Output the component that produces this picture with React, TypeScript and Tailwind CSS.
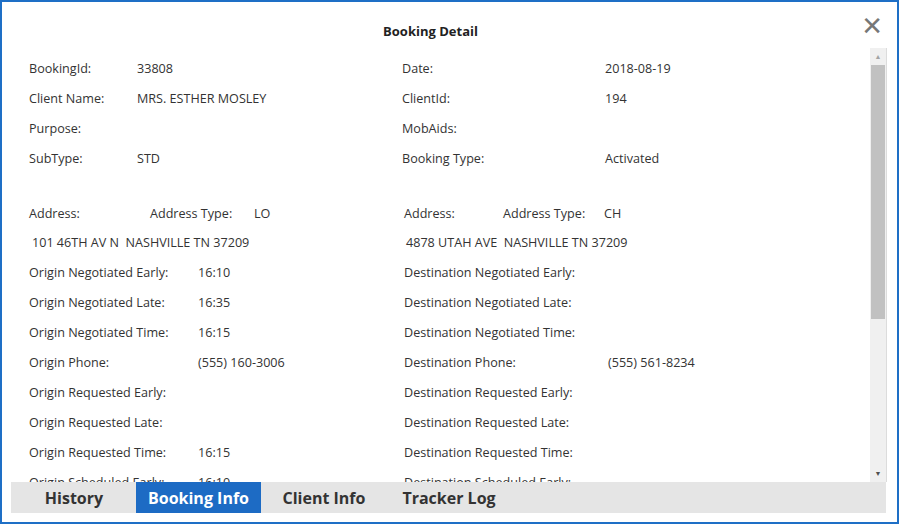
const topRows = [
  ["BookingId:", "33808", "Date:", "2018-08-19"],
  ["Client Name:", "MRS. ESTHER MOSLEY", "ClientId:", "194"],
  ["Purpose:", "", "MobAids:", ""],
  ["SubType:", "STD", "Booking Type:", "Activated"],
];

const timeRows = [
  ["Origin Negotiated Early:", "16:10", "Destination Negotiated Early:", ""],
  ["Origin Negotiated Late:", "16:35", "Destination Negotiated Late:", ""],
  ["Origin Negotiated Time:", "16:15", "Destination Negotiated Time:", ""],
  ["Origin Phone:", "(555) 160-3006", "Destination Phone:", "(555) 561-8234"],
  ["Origin Requested Early:", "", "Destination Requested Early:", ""],
  ["Origin Requested Late:", "", "Destination Requested Late:", ""],
  ["Origin Requested Time:", "16:15", "Destination Requested Time:", ""],
  ["Origin Scheduled Early:", "16:10", "Destination Scheduled Early:", ""],
];

// widths and left margins of the footer tabs
const tabs = [
  { name: "History", cls: "w-[80px]" },
  { name: "Booking Info", cls: "w-[125px] ml-[22px]" },
  { name: "Client Info", cls: "w-[104px] ml-[11px]" },
  { name: "Tracker Log", cls: "w-[112px] ml-[17px]" },
];

export default function App() {
  return (
    <div className="w-[899px] h-[524px] bg-white border-2 border-[#1e6fc6] flex flex-col font-['Open_Sans',sans-serif] text-[#333] overflow-hidden">
      {/* header */}
      <div className="h-[46px] shrink-0 flex items-end justify-center relative">
        <div className="pb-[7px] text-[13px] font-bold text-[#222] pr-[38px]">Booking Detail</div>
        <span className="absolute right-[14px] top-[11px] text-[#777] text-[26px] leading-none font-['DejaVu_Sans',sans-serif]">✕</span>
      </div>

      {/* body */}
      <div className="flex-1 min-h-0 flex ml-[9px] mr-[10px]">
        <div className="flex-1 min-h-0 overflow-hidden pl-[18px] pt-[6px] text-[12.6px] whitespace-nowrap">
          {topRows.map((r) => (
            <div key={r[0]} className="h-[30px] flex items-center">
              <div className="w-[108px]">{r[0]}</div>
              <div className="w-[265px]">{r[1]}</div>
              <div className="w-[203px]">{r[2]}</div>
              <div>{r[3]}</div>
            </div>
          ))}
          <div className="h-[25px]" />
          <div className="h-[30px] flex items-center">
            <div className="w-[121px]">Address:</div>
            <div className="w-[104px]">Address Type:</div>
            <div className="w-[150px]">LO</div>
            <div className="w-[99px]">Address:</div>
            <div className="w-[101px]">Address Type:</div>
            <div>CH</div>
          </div>
          <div className="h-[29px] flex items-center">
            <div className="w-[377px] pl-[3px]">101 46TH AV N&nbsp; NASHVILLE TN 37209</div>
            <div>4878 UTAH AVE&nbsp; NASHVILLE TN 37209</div>
          </div>
          {timeRows.map((r) => (
            <div key={r[0]} className="h-[30px] flex items-center">
              <div className="w-[169px]">{r[0]}</div>
              <div className="w-[206px]">{r[1]}</div>
              <div className="w-[204px]">{r[2]}</div>
              <div>{r[3]}</div>
            </div>
          ))}
        </div>

        {/* scrollbar */}
        <div className="w-[17px] shrink-0 bg-[#f0f0f0] border-r border-[#dcdcdc] flex flex-col items-center">
          <div className="h-[17px] w-full flex items-center justify-center text-[#a3a3a3] text-[7px] leading-none">▲</div>
          <div className="w-[14px] h-[254px] bg-[#c1c1c1]" />
          <div className="flex-1" />
          <div className="h-[17px] w-full flex items-center justify-center text-[#505050] text-[7px] leading-none">▼</div>
        </div>
      </div>

      {/* tab bar */}
      <div className="h-[31px] shrink-0 ml-[9px] mr-[11px] mb-[9px] bg-[#e5e5e5] flex items-stretch pl-[23px]">
        {tabs.map((t) => (
          <div
            key={t.name}
            className={
              t.cls +
              " flex items-center justify-center text-[16px] font-bold whitespace-nowrap " +
              (t.name === "Booking Info" ? "bg-[#1d6bc4] text-white" : "text-[#333]")
            }
          >
            {t.name}
          </div>
        ))}
      </div>
    </div>
  );
}
